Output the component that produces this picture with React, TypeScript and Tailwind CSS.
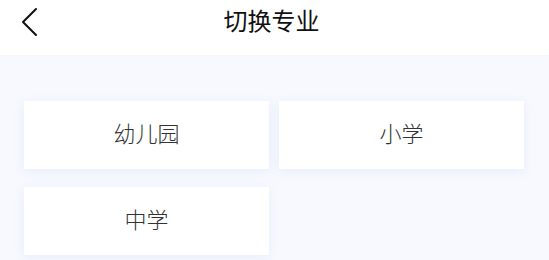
import React from "react";

const font = { fontFamily: '"Noto Sans CJK SC", "Noto Sans", sans-serif' };

function Card({ label }: { label: string }) {
  return (
    <div className="h-[68px] bg-white flex items-center justify-center pb-[6px] text-[22px] font-light text-[#333333] shadow-[0_2px_10px_rgba(200,215,245,0.35)]">
      {label}
    </div>
  );
}

export default function App() {
  return (
    <div className="w-[549px] h-[260px] bg-[#f7f9fe] overflow-hidden" style={font}>
      <div className="relative h-[55px] bg-white flex items-start justify-center">
        <svg
          className="absolute left-[20px] top-[6px]"
          width="20"
          height="32"
          viewBox="0 0 20 32"
          fill="none"
        >
          <path d="M16 3 L3 16 L16 29" stroke="#111" strokeWidth="2" strokeLinecap="round" strokeLinejoin="round" />
        </svg>
        <span className="text-[24px] font-normal text-[#111] leading-none mt-[8px] ml-[-6px]">切换专业</span>
      </div>
      <div className="grid grid-cols-2 gap-x-[10px] gap-y-[18px] pl-[24px] pr-[25px] pt-[46px]">
        <Card label="幼儿园" />
        <Card label="小学" />
        <Card label="中学" />
      </div>
    </div>
  );
}
